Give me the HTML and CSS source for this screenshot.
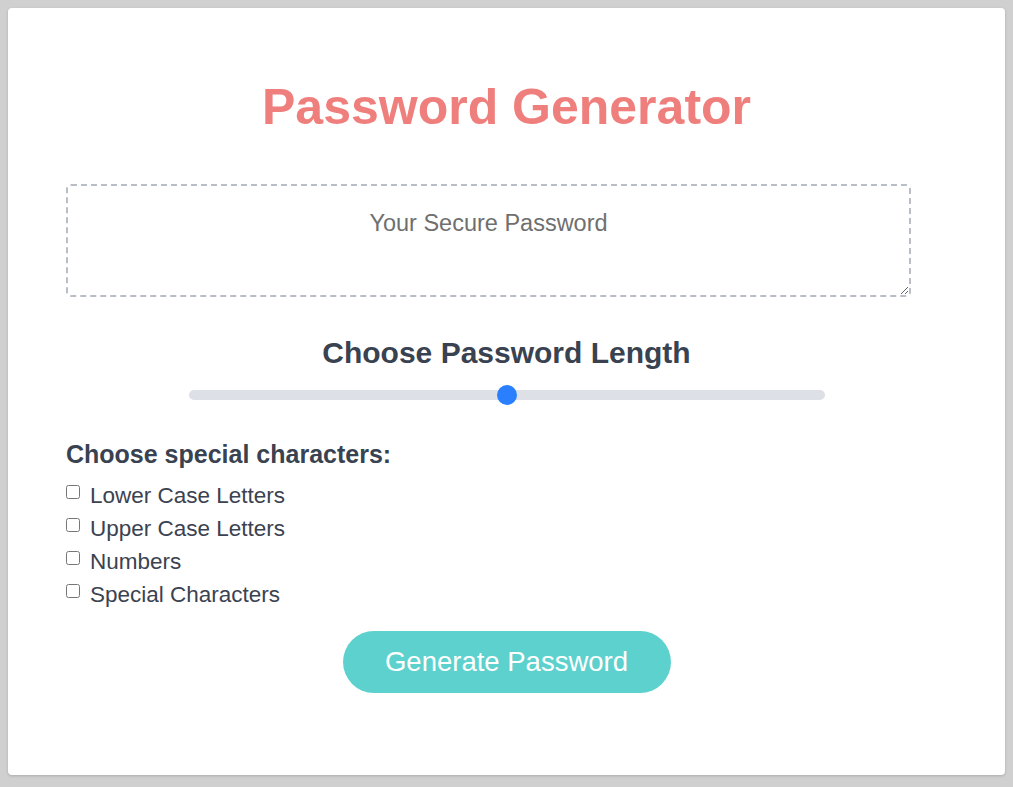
FILE: index.html
```html
<!DOCTYPE html>
<html lang="en">
<head>
<meta charset="utf-8">
<title>Password Generator</title>
<link rel="stylesheet" href="styles.css">
</head>
<body>
  <main class="card">
    <h1 class="title">Password Generator</h1>
    <textarea class="output" placeholder="Your Secure Password" readonly></textarea>
    <h2 class="length-title">Choose Password Length</h2>
    <input class="slider" type="range" min="0" max="100" value="50">
    <h3 class="options-title">Choose special characters:</h3>
    <div class="options">
      <label class="option"><input type="checkbox" class="check"><span>Lower Case Letters</span></label>
      <label class="option"><input type="checkbox" class="check"><span>Upper Case Letters</span></label>
      <label class="option"><input type="checkbox" class="check"><span>Numbers</span></label>
      <label class="option"><input type="checkbox" class="check"><span>Special Characters</span></label>
    </div>
    <button class="generate" type="button">Generate Password</button>
  </main>
</body>
</html>
```

FILE: styles.css
```css
html, body {
  height: 100%;
}
body {
  margin: 0;
  padding: 8px 8px 12px;
  box-sizing: border-box;
  background: #d0d0d0;
  font-family: "Liberation Sans", Arial, sans-serif;
}
.card {
  box-sizing: border-box;
  height: 767px;
  background: #ffffff;
  border-radius: 4px;
  box-shadow: 0 1px 3px rgba(0, 0, 0, 0.18);
  padding: 69px 58px 0;
  display: flex;
  flex-direction: column;
  align-items: center;
}
.title {
  margin: 0;
  font-size: 50px;
  line-height: 60px;
  font-weight: 700;
  color: #ef7f7c;
  text-align: center;
}
.output {
  align-self: flex-start;
  box-sizing: border-box;
  width: 845px;
  height: 113px;
  margin: 47px 0 0;
  padding: 24px 16px 20px;
  border: 2px dashed #b9bec6;
  border-radius: 5px;
  font-family: "Liberation Sans", Arial, sans-serif;
  font-size: 23.5px;
  line-height: 27px;
  text-align: center;
  color: #333;
  outline: none;
}
.output::placeholder {
  color: #6f6f6f;
}
.length-title {
  margin: 38px 0 0;
  font-size: 30px;
  line-height: 36px;
  font-weight: 700;
  color: #394250;
  text-align: center;
}
.slider {
  -webkit-appearance: none;
  appearance: none;
  width: 636px;
  height: 10px;
  margin: 19px 0 0;
  border-radius: 5px;
  background: #dde0e6;
  outline: none;
}
.slider::-webkit-slider-thumb {
  -webkit-appearance: none;
  appearance: none;
  width: 20px;
  height: 20px;
  border-radius: 50%;
  background: #2a7fff;
  border: none;
  cursor: pointer;
}
.options-title {
  align-self: flex-start;
  margin: 39px 0 0;
  font-size: 25px;
  line-height: 30px;
  font-weight: 700;
  color: #394250;
}
.options {
  align-self: flex-start;
  margin-top: 10px;
  display: flex;
  flex-direction: column;
}
.option {
  display: flex;
  align-items: flex-start;
  font-size: 22.5px;
  line-height: 33px;
  color: #3b4250;
}
.check {
  width: 14px;
  height: 14px;
  margin: 6px 10px 0 0;
}
.generate {
  margin-top: 20px;
  width: 328px;
  height: 62px;
  border: none;
  border-radius: 31px;
  background: #5dd1cd;
  color: #ffffff;
  font-family: "Liberation Sans", Arial, sans-serif;
  font-size: 27.5px;
  cursor: pointer;
}
```
